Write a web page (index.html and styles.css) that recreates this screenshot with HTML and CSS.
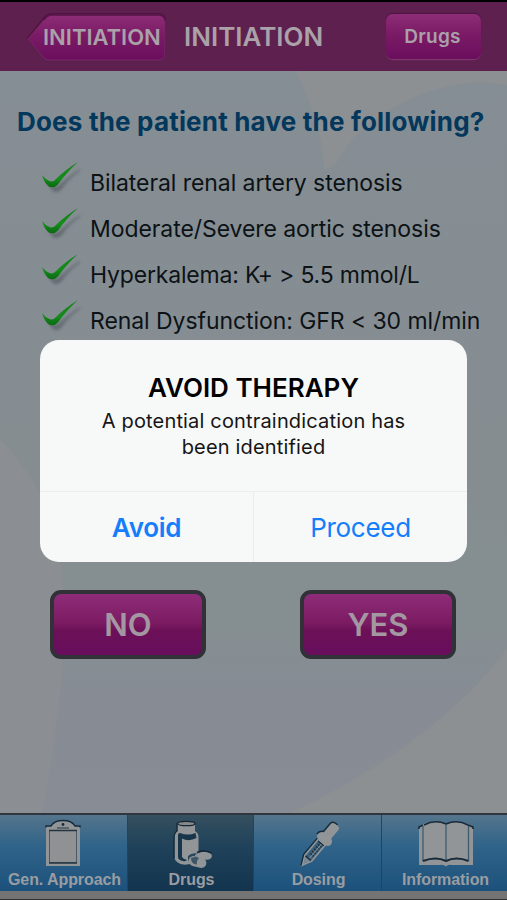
FILE: index.html
```
<!DOCTYPE html>
<html lang="en">
<head>
  <meta charset="UTF-8" />
  <meta name="viewport" content="width=device-width, initial-scale=1.0"/>
  <title>Initiation</title>
  <link rel="stylesheet" href="styles.css">
</head>
<body>
  <div class="app">
    <header class="navbar">
      <button class="back-btn">
        <svg class="back-shape" viewBox="0 0 142 50" width="142" height="50">
          <defs>
            <linearGradient id="pink" x1="0" y1="0" x2="0" y2="1">
              <stop offset="0" stop-color="#8d2c77"/>
              <stop offset=".45" stop-color="#7b1b66"/>
              <stop offset="1" stop-color="#6a0e5d"/>
            </linearGradient>
          </defs>
          <path d="M2 26 18 6Q21 2 26 2H132Q139 2 139 9V40Q139 47 132 47H22Q20 47 18 45Z" fill="none" stroke="#521343" stroke-width="2"/>
          <path d="M2 27 18 8Q21 3 26 3H132Q139 3 139 10V41Q139 48 132 48H22Q20 48 18 46Z" fill="url(#pink)" stroke="#762b67" stroke-width="1"/>
          <path d="M18 8Q21 3 26 3H132Q138 3 139 8" fill="none" stroke="#581748" stroke-width="1.5"/>
        </svg>
        <span>INITIATION</span>
      </button>
      <h1>INITIATION</h1>
      <button class="nav-btn">Drugs</button>
    </header>

    <main class="content">
      <svg class="backdrop" viewBox="0 0 507 742" width="507" height="742" preserveAspectRatio="none">
        <defs>
          <linearGradient id="wash" x1="0" y1="0" x2="0" y2="1">
            <stop offset="0" stop-color="#858e94"/>
            <stop offset=".55" stop-color="#858d91"/>
            <stop offset=".74" stop-color="#858f91"/>
            <stop offset=".84" stop-color="#878c94"/>
            <stop offset="1" stop-color="#888d95"/>
          </linearGradient>
        </defs>
        <rect width="507" height="742" fill="url(#wash)"/>
        <path d="M296 0H507V14Q470 8 438 18C395 30 355 57 338 90L325 100C322 60 310 30 296 0Z" fill="#8c9093"/>
        <path d="M0 368C35 405 62 450 64 530Q66 620 42 742H0Z" fill="#8b8f93"/>
        <path d="M507 578C465 635 390 695 290 742H507Z" fill="#8c9093"/>
      </svg>
      <h2>Does the patient have the following?</h2>
      <ul class="checks">
        <li><svg class="tick" viewBox="0 0 44 34"><use href="#tick"/></svg><span>Bilateral renal artery stenosis</span></li>
        <li><svg class="tick" viewBox="0 0 44 34"><use href="#tick"/></svg><span>Moderate/Severe aortic stenosis</span></li>
        <li><svg class="tick" viewBox="0 0 44 34"><use href="#tick"/></svg><span class="tight">Hyperkalema: K+ &gt; 5.5 mmol/L</span></li>
        <li><svg class="tick" viewBox="0 0 44 34"><use href="#tick"/></svg><span>Renal Dysfunction: GFR &lt; 30 ml/min</span></li>
      </ul>
      <div class="answers">
        <button>NO</button>
        <button>YES</button>
      </div>
    </main>

    <nav class="tabbar">
      <a class="tab">
        <svg viewBox="0 0 50 50" width="50" height="50">
          <path d="M7 9H41V48H7Z" fill="#929598"/>
          <path d="M7 9.500V8H12Q15 2.500 24 2.500T36 8H41V9.500" fill="#929598" stroke="#182a38" stroke-width="1.400"/>
          <path d="M10.500 12.500H37.500V44.500H10.500Z" fill="#8f9193" stroke="#4a5a66" stroke-width="1"/>
          <path d="M10 12.500H38M10 45H38" stroke="#233441" stroke-width="1.600" fill="none"/>
          <path d="M18 10H30" stroke="#5d6467" stroke-width="2"/>
          <circle cx="24" cy="6.500" r="1.400" fill="#182a38"/>
        </svg>
        <span>Gen. Approach</span>
      </a>
      <a class="tab active">
        <svg viewBox="0 0 50 50" width="50" height="50">
          <path d="M11.500 5H29V13Q32.500 15 32.500 19V38L27 45Q17 49 11 44Q8.500 42 8.500 39V20Q8.500 15 11.500 13Z" fill="#929598"/>
          <path d="M8 40V20Q8 15 11 13V5" fill="none" stroke="#142736" stroke-width="1.200"/>
          <ellipse cx="20.300" cy="5.500" rx="8.700" ry="2.200" fill="#87898b" stroke="#142736" stroke-width="1.300"/>
          <path d="M12 17Q12 15 14 15Q22 18 29.500 15L30.500 20Q23 24 16 20.500V39Q17 41 21 42Q19 44 17 43Q12 42 12 39Z" fill="#18364b"/>
          <path d="M22 38Q26 34 33 36L31 40 27 46Q21 45 22 38Z" fill="#29485c"/>
          <path d="M29 37Q38 31 44.500 35Q48 39 43 41.500Q39 42 36 41L29 38Z" fill="#929598"/>
          <path d="M31 34.500Q38 31.500 45.500 35" fill="none" stroke="#142736" stroke-width="1.500"/>
          <rect x="22.500" y="39" width="18" height="10" rx="5" transform="rotate(14 31.500 44)" fill="#929598"/>
          <path d="M25 40Q30 38 33 40Q30 43 31 46.500Q25 46 25 40Z" fill="#3d5564"/>
        </svg>
        <span>Drugs</span>
      </a>
      <a class="tab">
        <svg viewBox="0 0 50 50" width="50" height="50">
          <g transform="translate(25.500 28) rotate(40)">
            <path d="M-5-13V-25Q-5-28 0-28T5-25V-13Z" fill="#929598"/>
            <path d="M-5.500-14V-25Q-5-29 1-28.500" fill="none" stroke="#182a38" stroke-width="1.400"/>
            <path d="M-5-14H5Q9-12 8.500-8Q7-5 4-5H-4Q-7-5-8.500-8Q-9-12-5-14Z" fill="#929598"/>
            <path d="M-9-8Q-9.500-13-5-14.500" fill="none" stroke="#182a38" stroke-width="1.400"/>
            <path d="M-4.500-5V16L0 25 4.500 16V-5Z" fill="#39617c" stroke="#929598" stroke-width="1.700"/>
            <path d="M-6-5V16L-1 26M-3.500-3.500H4M-3.500 16H3.500" fill="none" stroke="#182a38" stroke-width="1.200"/>
            <path d="M-3 17H3L0 23Z" fill="#7e8a92"/>
            <path d="M-1.500-1H3M-1.500 2H3M-1.500 5H3M-1.500 8H3M-1.500 11H3" stroke="#182a38" stroke-width="1.400"/>
            <path d="M1-3V15" stroke="#858e94" stroke-width="1"/>
          </g>
        </svg>
        <span>Dosing</span>
      </a>
      <a class="tab">
        <svg viewBox="0 0 60 50" width="60" height="50">
          <path d="M4 9 8 6Q20 1 31 6Q42 1 53 6L58 9V47H37Q33 46 31 48.500Q29 46 24 47H4Z" fill="#929598"/>
          <path d="M4 11V9L8 7M53 7 58 9V11M9 7Q20 1 31 6Q42 1 53 7" fill="none" stroke="#182a38" stroke-width="1.600"/>
          <path d="M8 8V43M53.500 8V43M31 6V42" fill="none" stroke="#3c5c6e" stroke-width="1.300"/>
          <path d="M8 43Q21 38 31 43Q41 38 53.500 43" fill="none" stroke="#182a38" stroke-width="2"/>
        </svg>
        <span>Information</span>
      </a>
    </nav>
  </div>

  <!-- Alert -->
  <div class="overlay">
    <div class="alert" role="alertdialog">
      <div class="alert-body">
        <h3>AVOID THERAPY</h3>
        <p>A potential contraindication has<br>been identified</p>
      </div>
      <div class="alert-actions">
        <button class="bold">Avoid</button>
        <button>Proceed</button>
      </div>
    </div>
  </div>

  <!-- shared tick symbol -->
  <svg width="0" height="0" class="defs">
    <defs>
      <filter id="soft" x="-20%" y="-20%" width="140%" height="150%"><feGaussianBlur stdDeviation="1.800"/></filter>
      <linearGradient id="green" x1="0" y1="0" x2="0" y2="1">
        <stop offset="0" stop-color="#16801a"/>
        <stop offset=".65" stop-color="#158c1b"/>
        <stop offset="1" stop-color="#0b6912"/>
      </linearGradient>
      <symbol id="tick" viewBox="0 0 44 34">
        <path d="M9 23 14 29Q18 30 21 27Q28 16 40 8Q31 13 18 25Q13 26 9 23Z" fill="#62676e" stroke="#6b7077" stroke-width="2" filter="url(#soft)"/>
        <path d="M2 13Q6 18 11 19.500Q14 19.500 16 17Q25 8 38 0Q26 11 18 22.500Q15 26 10 25Q5 23 2 13Z" fill="url(#green)"/>
      </symbol>
    </defs>
  </svg>
</body>
</html>
```
FILE: styles.css
```
* { box-sizing: border-box; margin: 0; padding: 0; }
body {
  font-family: Inter, "Liberation Sans", sans-serif;
  background: #000;
  overflow: hidden;
}
button {
  font-family: inherit;
  border: none;
  background: none;
}
.defs { display: block; }
.app {
  height: 900px;
  width: 507px;
  display: flex;
  flex-direction: column;
  padding-top: 2px;
}

/* top bar */
.navbar {
  height: 69px;
  flex: none;
  display: flex;
  align-items: center;
  padding: 0 26px 0 26px;
  background: #5e204f;
  color: #aaa1a9;
}
.back-btn {
  width: 142px;
  height: 50px;
  display: grid;
  color: inherit;
  font-size: 22px;
  font-weight: 600;
}
.back-btn > * { grid-area: 1 / 1; }
.back-btn span {
  align-self: center;
  justify-self: start;
  padding-left: 17px;
}
.navbar h1 {
  margin-left: 16px;
  font-size: 26px;
  font-weight: 600;
}
.nav-btn {
  width: 95px;
  height: 45px;
  margin-left: auto;
  padding-right: 2px;
  border-radius: 7px;
  background: linear-gradient(#8d2c77, #7b1b66 45%, #6a0e5d);
  box-shadow: 0 -1px 1px #501342, 0 1px 1px #823a73;
  color: inherit;
  font-size: 19px;
  font-weight: 600;
  letter-spacing: 0.3px;
}

/* question */
.content {
  flex: 1;
  display: grid;
  grid-template-rows: 84px 1fr 223px;
}
.backdrop {
  grid-area: 1 / 1 / 4 / 2;
  display: block;
}
.content h2 {
  grid-area: 1 / 1;
  z-index: 1;
  padding: 35px 0 0 17px;
  color: #03375c;
  font-size: 26px;
  font-weight: 700;
  line-height: 32px;
  letter-spacing: 0.19px;
  white-space: nowrap;
}
.checks {
  grid-area: 2 / 1;
  z-index: 1;
  list-style: none;
  padding: 5px 0 0 40px;
}
.checks li {
  height: 46px;
  display: flex;
  align-items: center;
  gap: 6px;
  color: #0c1216;
  font-size: 23px;
  letter-spacing: -0.07px;
  white-space: nowrap;
}
.checks .tight { letter-spacing: -0.18px; }
.tick {
  width: 44px;
  height: 34px;
  margin-top: -8px;
}
.answers {
  grid-area: 3 / 1;
  z-index: 1;
  display: flex;
  justify-content: space-between;
  padding: 0 51px 0 50px;
}
.answers button {
  width: 156px;
  height: 69px;
  border: 4px solid #303238;
  border-radius: 11px;
  background: linear-gradient(#8f2c79, #7b1b62 48%, #6c1058 60%, #670e5c);
  color: #a398a2;
  font-size: 31px;
  font-weight: 600;
}

/* bottom tabs */
.tabbar {
  height: 87px;
  flex: none;
  display: grid;
  grid-template-columns: 127px 126px 128px 126px;
  border-top: 2px solid #30363d;
  border-bottom: 1px solid #303030;
  padding-bottom: 8px;
  background: #747474;
}
.tab {
  display: flex;
  flex-direction: column;
  align-items: center;
  padding-top: 3px;
  border-left: 1px solid #214561;
  background: linear-gradient(#55758d, #306489 40%, #1c517c);
  color: #999da2;
  font-family: "Liberation Sans", Arial, sans-serif;
  font-size: 16px;
  font-weight: 700;
  line-height: 20px;
  letter-spacing: -0.08px;
  white-space: nowrap;
}
.tab:first-child { border-left: none; }
.tab.active { background: linear-gradient(#35505f, #20425a 40%, #12344e); }
.tab svg { overflow: visible; }
.tab span {
  margin-top: 2px;
  padding-left: 2px;
}

/* alert */
.overlay {
  position: absolute;
  inset: 0;
  padding: 340px 40px 0;
}
.alert {
  width: 427px;
  height: 222px;
  display: flex;
  flex-direction: column;
  border-radius: 19px;
  background: #f7f8f8;
  overflow: hidden;
  text-align: center;
}
.alert-body {
  flex: 1;
  padding-top: 31px;
}
.alert h3 {
  font-size: 26px;
  font-weight: 600;
  line-height: 34px;
}
.alert p {
  padding-top: 3px;
  color: #151515;
  font-size: 20px;
  line-height: 26px;
  letter-spacing: 0.17px;
}
.alert-actions {
  height: 71px;
  display: flex;
  border-top: 1px solid #eceeee;
}
.alert-actions button {
  flex: 1;
  color: #147efb;
  font-size: 26px;
  letter-spacing: -0.3px;
}
.alert-actions button + button { border-left: 1px solid #eceeee; }
.alert-actions .bold { font-weight: 600; }
```
